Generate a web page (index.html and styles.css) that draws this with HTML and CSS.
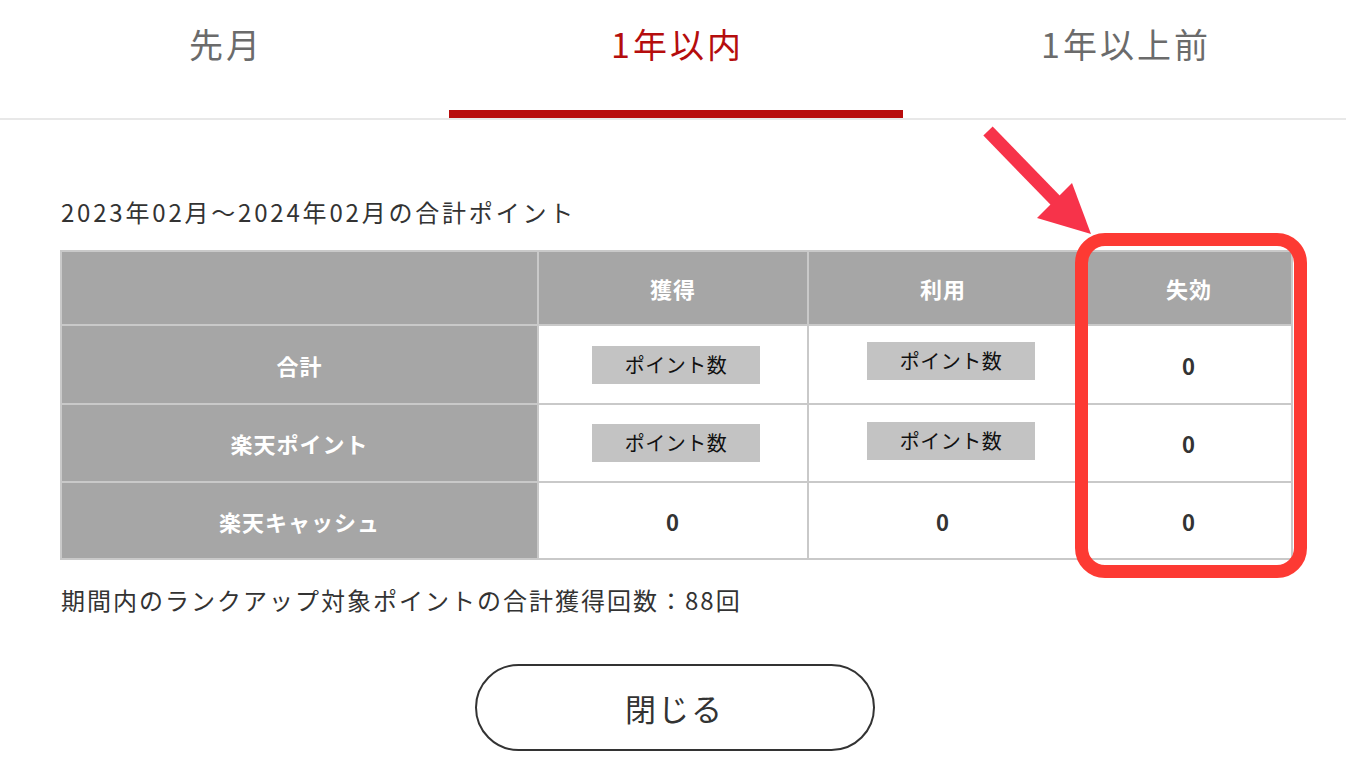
FILE: index.html
```html
<!DOCTYPE html>
<html lang="ja">
<head>
<meta charset="utf-8">
<title>ポイント実績</title>
<link rel="stylesheet" href="styles.css">
</head>
<body>
<nav class="tabs">
  <div class="tab tab-first">先月</div>
  <div class="tab tab-mid active">1年以内</div>
  <div class="tab tab-last">1年以上前</div>
</nav>
<main class="main">
  <p class="title">2023年02月～2024年02月の合計ポイント</p>
  <table class="points">
    <colgroup>
      <col class="c1"><col class="c2"><col class="c3"><col class="c4">
    </colgroup>
    <thead>
      <tr class="head-row"><th></th><th>獲得</th><th>利用</th><th class="last">失効</th></tr>
    </thead>
    <tbody>
      <tr class="r1"><th>合計</th><td><span class="chip chip-a">ポイント数</span></td><td><span class="chip chip-b">ポイント数</span></td><td class="last">0</td></tr>
      <tr class="r2"><th>楽天ポイント</th><td><span class="chip chip-a">ポイント数</span></td><td><span class="chip chip-b">ポイント数</span></td><td class="last">0</td></tr>
      <tr class="r3"><th>楽天キャッシュ</th><td>0</td><td>0</td><td class="last">0</td></tr>
    </tbody>
  </table>
  <p class="note">期間内のランクアップ対象ポイントの合計獲得回数：88回</p>
  <div class="actions"><button class="close">閉じる</button></div>
</main>
<div class="highlight"></div>
<svg class="arrow" width="1346" height="757" viewBox="0 0 1346 757">
  <line x1="988" y1="131" x2="1056" y2="201" stroke="#f7334a" stroke-width="13"/>
  <polygon points="1037,218 1072,183 1091,234" fill="#f7334a"/>
</svg>
</body>
</html>
```
FILE: styles.css
```css
html, body {
  margin: 0;
  padding: 0;
  background: #fff;
}
body {
  font-family: "Noto Sans CJK JP", "Noto Sans", sans-serif;
  color: #333;
  width: 1346px;
  height: 757px;
  overflow: hidden;
  position: relative;
}
.tabs {
  display: flex;
  height: 118px;
  border-bottom: 2px solid #e8e8e8;
}
.tab {
  box-sizing: border-box;
  text-align: center;
  font-size: 34px;
  line-height: 40px;
  padding-top: 24px;
  color: #6b6b6b;
  letter-spacing: 3px;
  text-indent: 3px;
}
.tab-first { width: 449px; }
.tab-mid { width: 454px; }
.tab-last { width: 443px; }
.tab.active {
  color: #b50d0d;
  border-bottom: 8px solid #b80c0c;
}
.main {
  padding: 0 55px 0 60px;
}
.title {
  margin: 75px 0 0 1px;
  font-size: 24px;
  line-height: 34px;
  color: #333;
  letter-spacing: 2.8px;
}
.points {
  margin-top: 21px;
  width: 1231px;
  border-collapse: collapse;
  border: 2px solid #c9c9c9;
  table-layout: fixed;
}
.c1 { width: 477px; }
.c2 { width: 270px; }
.c3 { width: 270px; }
.c4 { width: 214px; }
.points th, .points td {
  border: 2px solid #c9c9c9;
  text-align: center;
  padding: 0;
  font-size: 22px;
  font-weight: bold;
  letter-spacing: 1px;
}
.points th {
  background: #a6a6a6;
  color: #fff;
}
.points thead th {
  height: 72px;
}
.points td {
  color: #333;
  background: #fff;
}
.points .last { padding-left: 8px; }
.r1 > * { height: 77px; }
.r2 > * { height: 76px; }
.r3 > * { height: 75px; }
.chip {
  display: inline-block;
  width: 168px;
  height: 38px;
  line-height: 38px;
  background: #c3c3c3;
  color: #111;
  font-size: 20px;
  font-weight: normal;
  letter-spacing: 0.5px;
}
.chip-a { margin-left: 6px; }
.chip-b { margin-left: 16px; }
.r1 .chip-b { position: relative; top: -4px; }
.r2 .chip-b { position: relative; top: -2px; }
.note {
  margin: 23px 0 0 1px;
  font-size: 24px;
  line-height: 34px;
  color: #333;
  letter-spacing: 2px;
}
.actions {
  display: flex;
  justify-content: center;
  width: 1231px;
  margin-top: 47px;
}
.close {
  width: 400px;
  height: 87px;
  border: 2px solid #333;
  border-radius: 44px;
  background: #fff;
  font-family: "Noto Sans CJK JP", "Noto Sans", sans-serif;
  font-size: 31px;
  color: #333;
  letter-spacing: 2px;
  margin-left: -2px;
}
.highlight {
  position: absolute;
  left: 1075px;
  top: 233px;
  width: 232px;
  height: 345px;
  box-sizing: border-box;
  border: 13px solid #fd3a33;
  border-radius: 30px;
}
.arrow {
  position: absolute;
  left: 0;
  top: 0;
  pointer-events: none;
}
```
